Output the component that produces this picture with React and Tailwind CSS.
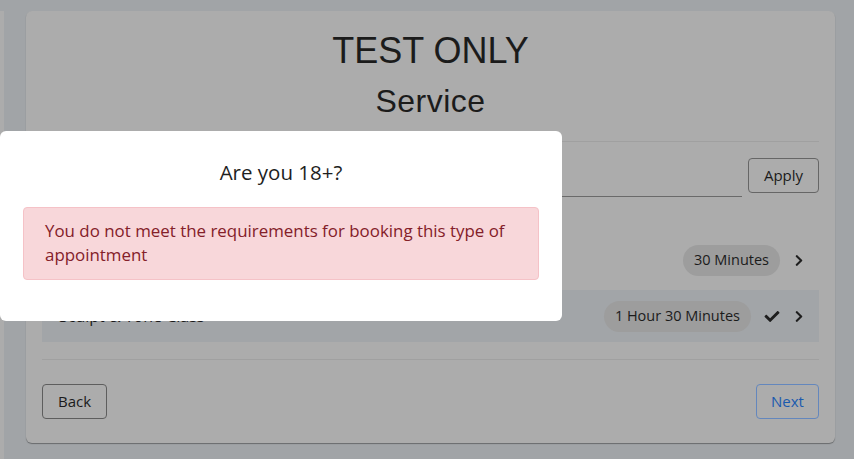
import React from "react";
import { FaCheck, FaChevronRight } from "react-icons/fa";

const body = { fontFamily: '"Open Sans", "Noto Sans", sans-serif' };
const head = { fontFamily: '"Liberation Sans", Arial, sans-serif' };

function ServiceRow({ name, duration, selected, className = "" }) {
  return (
    <div
      className={`flex h-[52px] items-center pl-[17px] pr-[16px] ${
        selected ? "bg-[#a2a5a8]" : ""
      } ${className}`}
    >
      <span className="flex-1 text-[16px] text-[#1b1b1b]">{name}</span>
      <span className="flex h-[31px] items-center rounded-full bg-[#9d9d9d] px-[11px] text-[14.5px] text-[#1b1b1b]">
        {duration}
      </span>
      {selected && <FaCheck className="ml-[13px] h-[15px] w-[16px] text-[#1e1e1e]" />}
      <FaChevronRight className="ml-[15px] h-[13px] w-[8px] text-[#1e1e1e]" />
    </div>
  );
}

export default function App() {
  return (
    <div className="relative h-[459px] w-[854px] overflow-hidden bg-[#a1a4a7]" style={body}>
      <div className="flex h-full">
        <div className="mt-[11px] w-[4px] bg-[#acacac]" />
        <div className="ml-[22px] mt-[11px] flex h-[432px] w-[809px] flex-col rounded-[6px] bg-[#acacac] px-[16px] pt-[18px] shadow-[0_1px_1px_rgba(0,0,0,0.35)]">
          <h1 className="h-[43px] text-center text-[36px] leading-[43px] text-[#1b1b1b]" style={head}>
            TEST ONLY
          </h1>
          <h2
            className="mt-[10px] h-[38px] text-center text-[32px] leading-[38px] tracking-[0.5px] text-[#1b1b1b]"
            style={head}
          >
            Service
          </h2>
          <div className="mt-[21px] border-t border-[#a0a0a0]" />

          <div className="mt-[16px] flex gap-[6px]">
            <input
              className="h-[39px] flex-1 border-b border-[#6a6a6a] bg-transparent outline-none"
              placeholder=""
            />
            <button className="h-[35px] w-[71px] rounded-[4px] border border-[#666] text-[15px] text-[#1b1b1b]">
              Apply
            </button>
          </div>

          <div className="mt-[37px] flex flex-col">
            <ServiceRow name="" duration="30 Minutes" />
            <ServiceRow
              name="Sculpt & Tone Class"
              duration="1 Hour 30 Minutes"
              selected
              className="mt-[4px]"
            />
          </div>

          <div className="mt-[17px] border-t border-[#a0a0a0]" />

          <div className="mt-[24px] flex justify-between">
            <button className="h-[35px] w-[65px] rounded-[4px] border border-[#5e5e5e] text-[15px] text-[#1b1b1b]">
              Back
            </button>
            <button className="h-[35px] w-[63px] rounded-[4px] border border-[#6487bd] text-[15px] text-[#1b5aae]">
              Next
            </button>
          </div>
        </div>
      </div>

      {/* age confirmation dialog */}
      <div className="absolute left-0 top-[131px] flex h-[190px] w-[562px] flex-col rounded-[6px] bg-white px-[23px]">
        <p className="mt-[29px] text-center text-[20.5px] leading-[24px] text-[#1e1e1e]">Are you 18+?</p>
        <div className="mt-[23px] h-[73px] rounded-[4px] border border-[#f5c2c7] bg-[#f8d7da] px-[21px] py-[11px] text-[16.9px] leading-[24px] text-[#842029]">
          You do not meet the requirements for booking this type of appointment
        </div>
      </div>
    </div>
  );
}
